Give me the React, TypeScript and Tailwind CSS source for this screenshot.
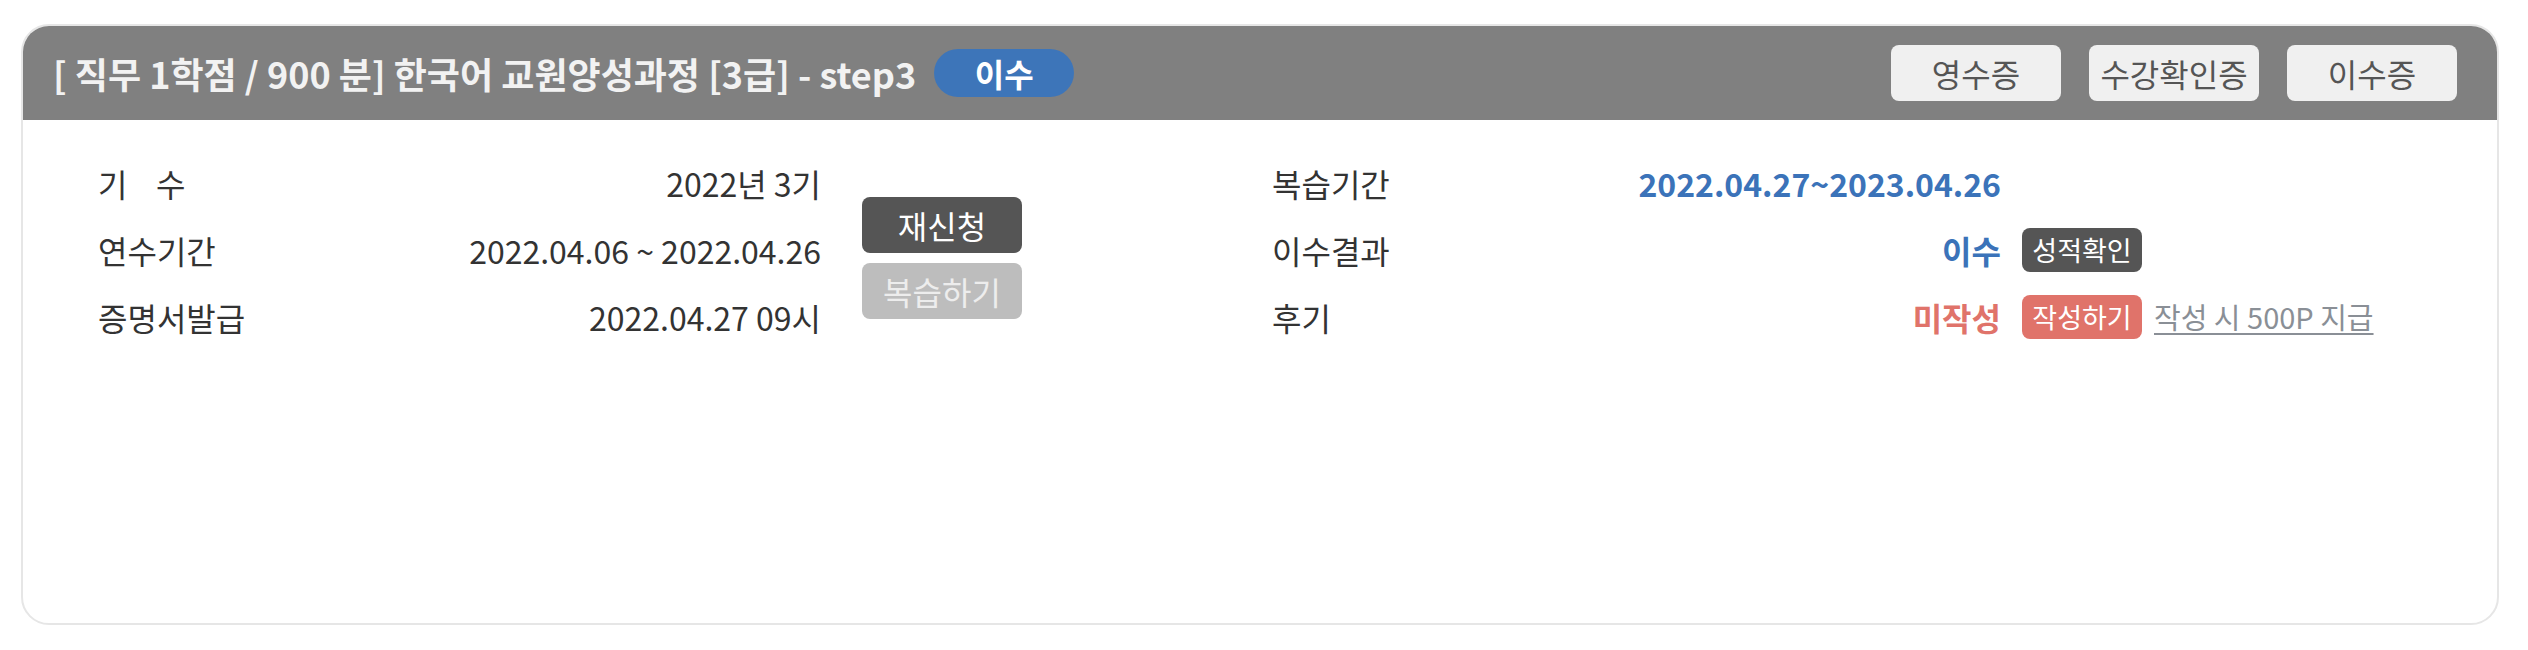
import React from "react";

const font = { fontFamily: '"Noto Sans CJK KR", "Noto Sans", sans-serif' };

const leftRows = [
  { label: "기    수", value: "2022년 3기" },
  { label: "연수기간", value: "2022.04.06 ~ 2022.04.26" },
  { label: "증명서발급", value: "2022.04.27 09시" },
];

export default function App() {
  return (
    <div className="bg-white w-[2528px] h-[650px] pt-[24px] pl-[21px]" style={font}>
      <div className="w-[2478px] h-[601px] rounded-[28px] border-2 border-[#e6e6e6] overflow-hidden bg-white">
        {/* header */}
        <div className="h-[94px] bg-[#808080] flex items-center pl-[30px] pr-[40px]">
          <h1 className="text-[36px] font-bold text-[#f2f2f2] leading-none whitespace-pre">
            [ 직무 1학점 / 900 분] 한국어 교원양성과정 [3급] - step3
          </h1>
          <span className="ml-[18px] w-[140px] h-[48px] rounded-full bg-[#3d75b9] text-white text-[32px] font-bold flex items-center justify-center leading-none">
            이수
          </span>
          <div className="ml-auto flex gap-[28px]">
            {["영수증", "수강확인증", "이수증"].map((b) => (
              <button
                key={b}
                className="w-[170px] h-[56px] rounded-[8px] bg-[#f0f0f0] text-[#555] text-[32px] leading-none flex items-center justify-center"
              >
                {b}
              </button>
            ))}
          </div>
        </div>

        {/* body */}
        <div className="flex pt-[29px] pl-[75px] text-[32px] text-[#333]">
          <div className="w-[723px]">
            {leftRows.map((r) => (
              <div key={r.label} className="h-[67px] flex items-center justify-between leading-none">
                <span className="whitespace-pre">{r.label}</span>
                <span>{r.value}</span>
              </div>
            ))}
          </div>

          <div className="ml-[41px] mt-[48px] flex flex-col gap-[10px]">
            <button className="w-[160px] h-[56px] rounded-[8px] bg-[#555] text-white text-[32px] leading-none flex items-center justify-center">
              재신청
            </button>
            <button className="w-[160px] h-[56px] rounded-[8px] bg-[#bdbdbd] text-[#ededed] text-[32px] leading-none flex items-center justify-center">
              복습하기
            </button>
          </div>

          <div className="ml-[250px]">
            <div className="h-[67px] flex items-center leading-none">
              <div className="w-[729px] flex justify-between items-center">
                <span>복습기간</span>
                <span className="font-bold text-[#3b73b9]">2022.04.27~2023.04.26</span>
              </div>
            </div>
            <div className="h-[67px] flex items-center leading-none">
              <div className="w-[729px] flex justify-between items-center">
                <span>이수결과</span>
                <span className="font-bold text-[#3b73b9]">이수</span>
              </div>
              <span className="ml-[21px] w-[120px] h-[44px] rounded-[8px] bg-[#555] text-white text-[27px] flex items-center justify-center">
                성적확인
              </span>
            </div>
            <div className="h-[67px] flex items-center leading-none">
              <div className="w-[729px] flex justify-between items-center">
                <span>후기</span>
                <span className="font-bold text-[#e0736a]">미작성</span>
              </div>
              <span className="ml-[21px] w-[120px] h-[44px] rounded-[8px] bg-[#e0736a] text-white text-[27px] flex items-center justify-center">
                작성하기
              </span>
              <a className="ml-[12px] text-[29px] text-[#8a8f96] underline underline-offset-4 cursor-pointer">
                작성 시 500P 지급
              </a>
            </div>
          </div>
        </div>
      </div>
    </div>
  );
}
